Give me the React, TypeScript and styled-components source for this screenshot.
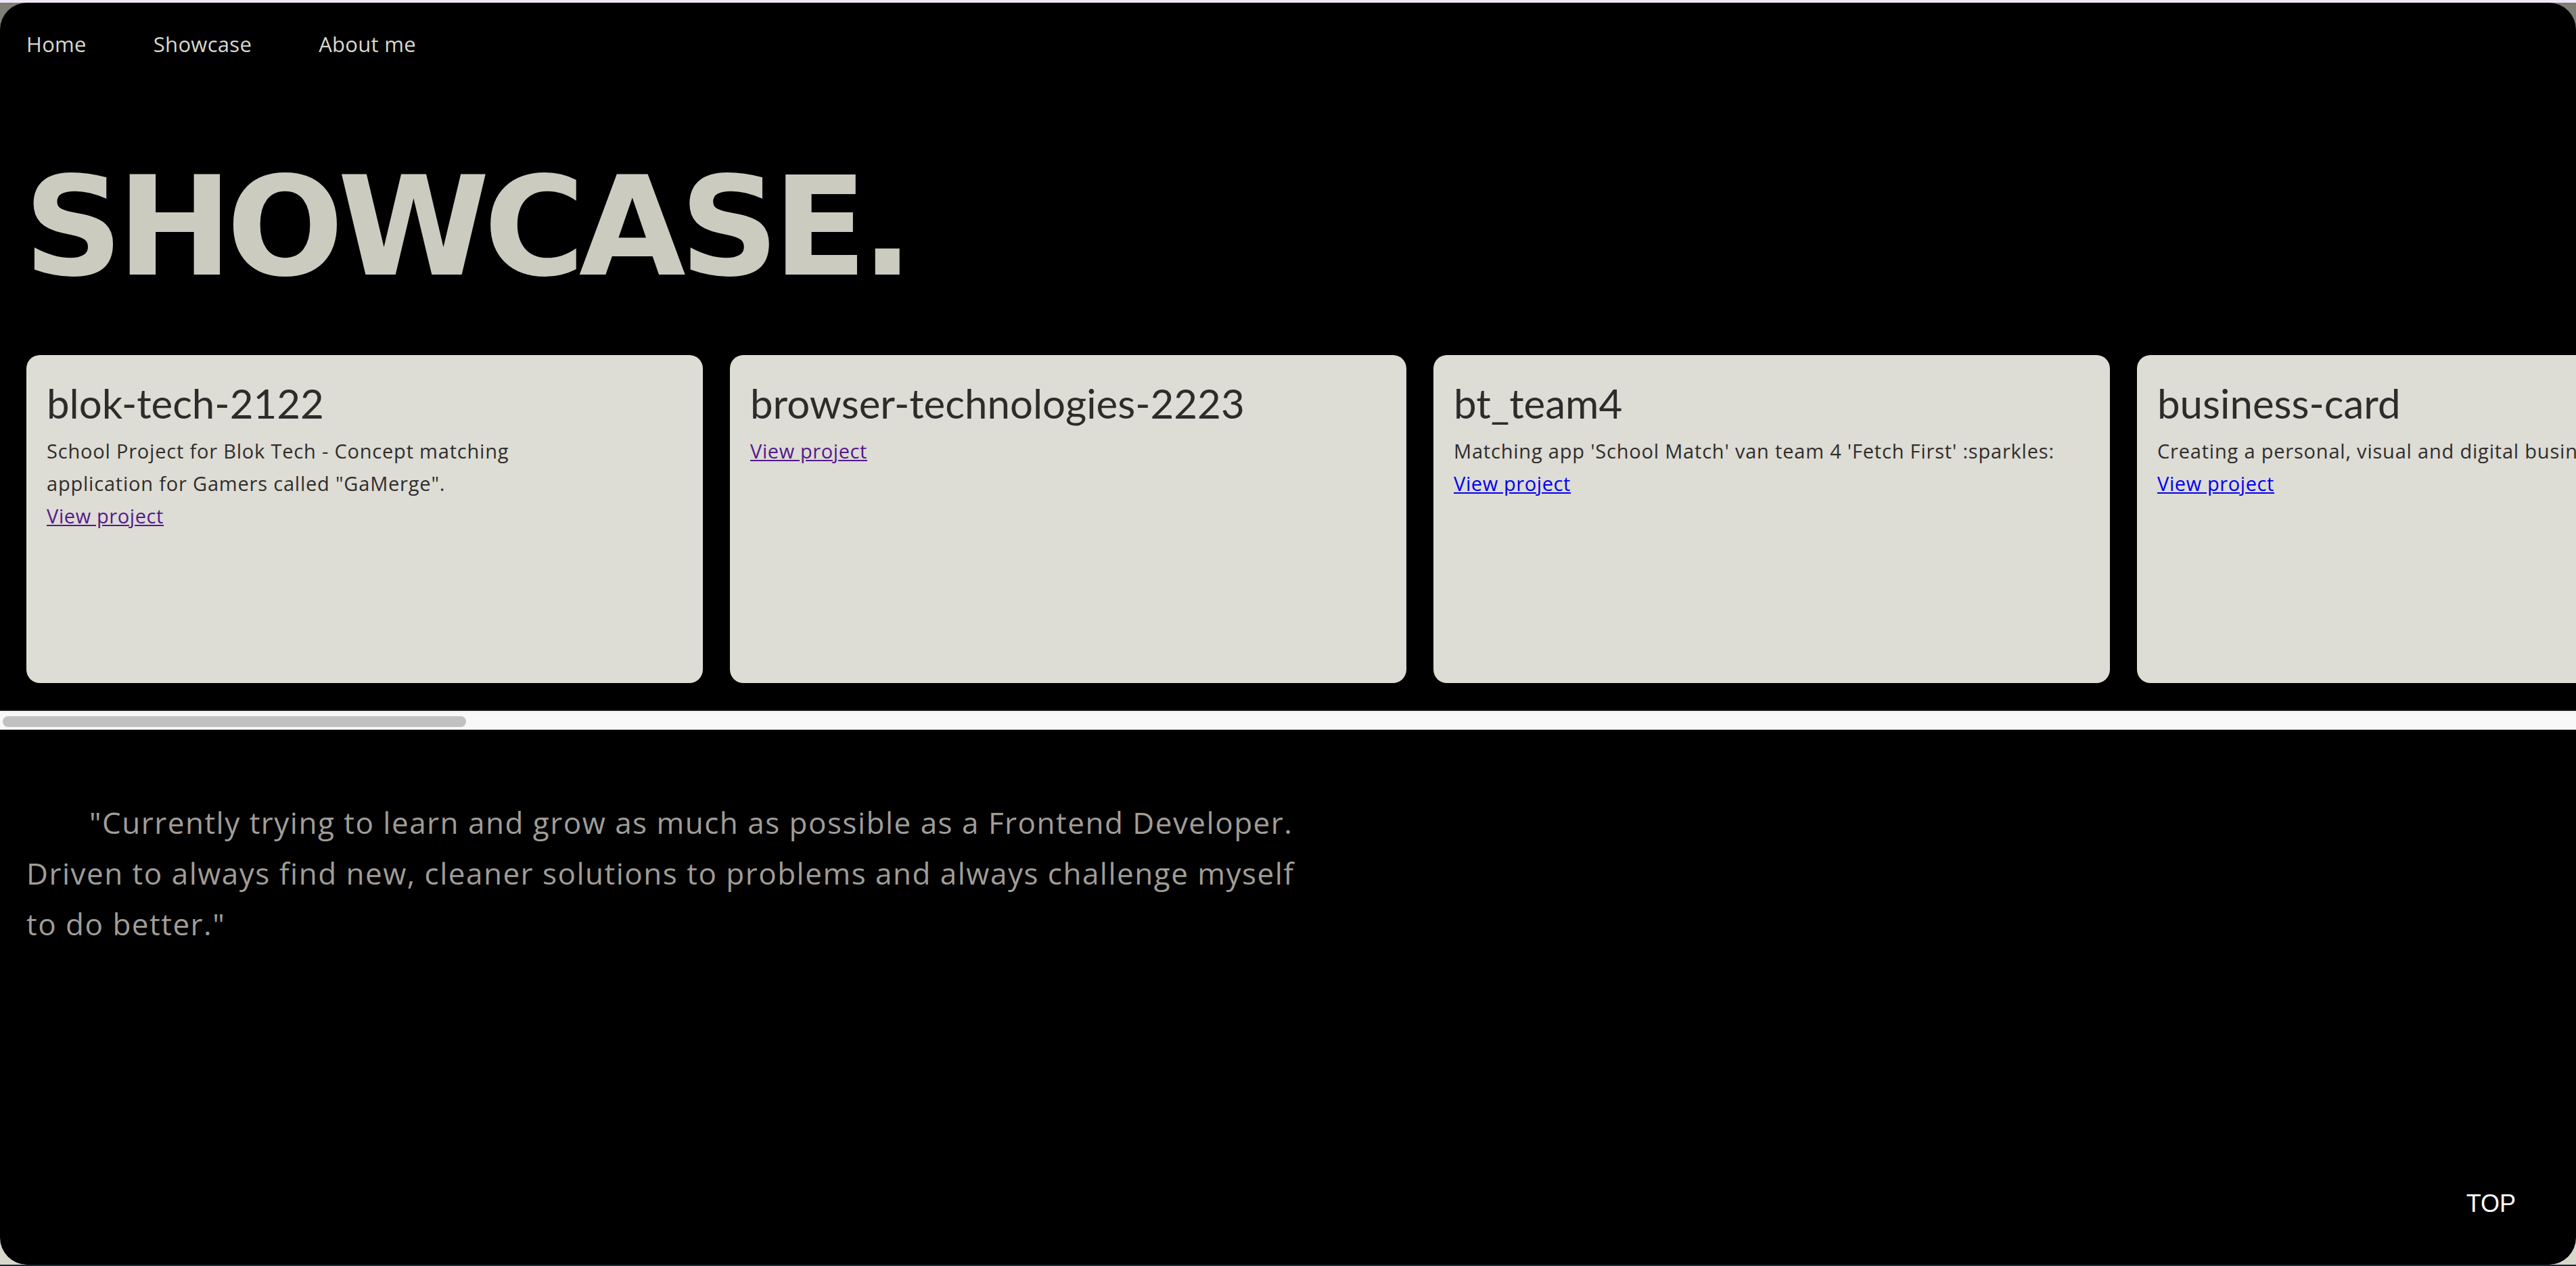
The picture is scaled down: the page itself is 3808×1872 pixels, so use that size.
import React from "react";
import styled, { createGlobalStyle } from "styled-components";

const GlobalStyle = createGlobalStyle`
  html, body {
    margin: 0;
    padding: 0;
    height: 100%;
    overflow: hidden;
  }
  body {
    font-family: "Open Sans", Lato, sans-serif;
  }
  * { box-sizing: border-box; }
`;

const Shell = styled.div`
  height: 100vh;
  display: flex;
  flex-direction: column;
  background: linear-gradient(180deg, #7e7e77 0%, #a8a89f 45%, #d8d8cc 100%);
  border-top: 4px solid #efe7f5;
  border-bottom: 2px solid #1c2533;
`;

const Main = styled.main`
  position: relative;
  flex: 1;
  background: #000;
  border-radius: 40px;
  overflow: hidden;
  display: flex;
  flex-direction: column;
`;

const Nav = styled.nav`
  display: flex;
  gap: 99px;
  padding: 43px 39px 0;
`;

const NavLink = styled.a`
  font-family: "Open Sans", Lato, sans-serif;
  font-size: 31px;
  line-height: 1.2;
  letter-spacing: 0.3px;
  color: #d9d8cf;
  text-decoration: none;
`;

const Title = styled.h1`
  margin: 150px 0 0;
  padding: 0 35px;
  font-family: "DejaVu Sans", sans-serif;
  font-weight: 700;
  font-size: 204px;
  line-height: 1;
  letter-spacing: -9px;
  color: #cbcbc0;
`;

const Scroller = styled.section`
  display: flex;
  gap: 40px;
  margin-top: 87px;
  padding: 0 39px 41px;
  overflow-x: auto;
  overflow-y: hidden;
  scrollbar-width: none;

  &::-webkit-scrollbar {
    display: none;
  }
`;

const ScrollTrack = styled.div`
  height: 28px;
  padding: 6px 0 4px 4px;
  background: #f8f8f8;
  border-top: 2px solid #ececec;
`;

const ScrollThumb = styled.div`
  height: 16px;
  border-radius: 8px;
  background: #c1c1c1;
`;

const Card = styled.article`
  flex: 0 0 1000px;
  height: 485px;
  padding: 35px 30px 30px;
  background: #dddcd5;
  border-radius: 20px;
  color: #2e2c2a;
`;

const CardTitle = styled.h2`
  margin: 0 0 11px;
  font-family: Lato, "Open Sans", sans-serif;
  font-weight: 400;
  font-size: 60px;
  line-height: 1.2;
  white-space: nowrap;
`;

const CardText = styled.p`
  margin: 0;
  font-size: 29px;
  line-height: 48px;
  letter-spacing: 0.8px;
  color: #2f2d2b;
`;

const ProjectLink = styled.a<{ $visited?: boolean }>`
  display: block;
  width: max-content;
  font-size: 29px;
  line-height: 48px;
  letter-spacing: 0.6px;
  color: ${(p) => (p.$visited ? "#551a8b" : "#0000ee")};
  text-decoration: underline;
`;

const Quote = styled.p`
  margin: 100px 0 0;
  padding: 0 39px;
  font-size: 44px;
  line-height: 75px;
  letter-spacing: 1.5px;
  text-indent: 93px;
  white-space: nowrap;
  color: #a09d98;
`;

const TopLink = styled.a`
  position: absolute;
  right: 89px;
  bottom: 69px;
  font-family: "Liberation Sans", Arial, sans-serif;
  font-size: 36px;
  color: #fff;
  text-decoration: none;
`;

type Repo = { name: string; description?: React.ReactNode; visited?: boolean };

const repos: Repo[] = [
  {
    name: "blok-tech-2122",
    description: (
      <>
        School Project for Blok Tech - Concept matching
        <br />
        application for Gamers called "GaMerge".
      </>
    ),
    visited: true,
  },
  { name: "browser-technologies-2223", visited: true },
  {
    name: "bt_team4",
    description: "Matching app 'School Match' van team 4 'Fetch First' :sparkles:",
  },
  {
    name: "business-card",
    description: "Creating a personal, visual and digital business card.",
  },
  { name: "css-to-the-rescue-2223" },
  { name: "frontend-applications" },
  { name: "functional-programming" },
  { name: "hackathon-2023" },
  { name: "inclusive-design" },
  { name: "minor-web-dev" },
  { name: "portfolio" },
  { name: "progressive-web-apps-2223" },
  { name: "project-tech" },
  { name: "real-time-web-2223" },
  { name: "sprint-planning" },
  { name: "the-startup" },
  { name: "web-app-from-scratch-2223" },
  { name: "web-design-2223" },
  { name: "visual-thinking" },
  { name: "weekly-nerd" },
];

const VIEWPORT = 3808;
const CARD = 1000;
const GAP = 40;
const PAD = 39;
const contentWidth = PAD * 2 + repos.length * CARD + (repos.length - 1) * GAP;
const thumbWidth = Math.round((VIEWPORT * VIEWPORT) / contentWidth) - 11;

export default function App() {
  return (
    <>
      <GlobalStyle />
      <Shell>
        <Main>
          <Nav>
            <NavLink href="#">Home</NavLink>
            <NavLink href="#">Showcase</NavLink>
            <NavLink href="#">About me</NavLink>
          </Nav>
          <Title>SHOWCASE.</Title>
          <Scroller>
            {repos.map((r) => (
              <Card key={r.name}>
                <CardTitle>{r.name}</CardTitle>
                {r.description && <CardText>{r.description}</CardText>}
                <ProjectLink href="#" $visited={r.visited}>
                  View project
                </ProjectLink>
              </Card>
            ))}
          </Scroller>
          <ScrollTrack>
            <ScrollThumb style={{ width: thumbWidth }} />
          </ScrollTrack>
          <Quote>
            "Currently trying to learn and grow as much as possible as a Frontend Developer.
            <br />
            Driven to always find new, cleaner solutions to problems and always challenge myself
            <br />
            to do better."
          </Quote>
          <TopLink href="#">TOP</TopLink>
        </Main>
      </Shell>
    </>
  );
}
